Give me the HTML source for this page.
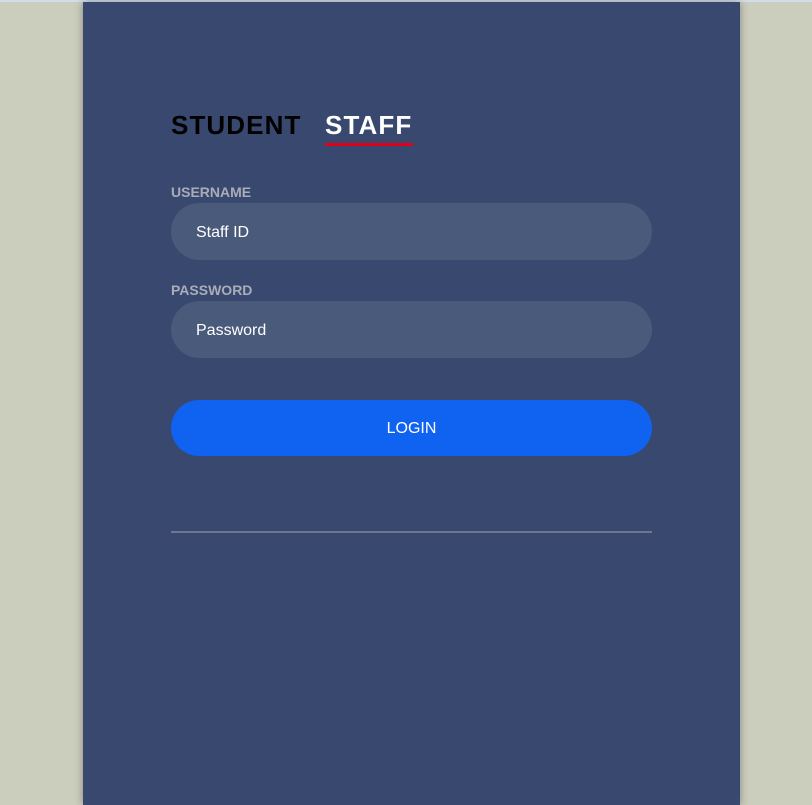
<!DOCTYPE html>
<html><head><style>
html,body{margin:0;padding:0;}
body{width:812px;height:805px;background:#cbcdbd;position:relative;overflow:hidden;font-family:"Liberation Sans",sans-serif;}
.top{position:absolute;left:0;top:0;width:812px;height:2px;background:#d3dde9;}
.card{position:absolute;left:83px;top:2px;width:657px;height:803px;background:#39486e;box-shadow:0 0 8px rgba(0,0,0,0.35);}
.tab{position:absolute;top:109px;font-size:26px;font-weight:bold;line-height:32px;letter-spacing:1.1px;}
.ul{position:absolute;left:325px;top:143px;width:88px;height:3px;background:#e0001a;}
.lbl{position:absolute;left:171px;font-size:14px;font-weight:bold;color:#a9adb8;}
.inp{position:absolute;left:171px;width:481px;height:57px;border-radius:29px;background:#4a5a7b;color:#fff;font-size:16px;line-height:59px;box-sizing:border-box;padding-left:25px;}
.btn{position:absolute;left:171px;top:400px;width:481px;height:56px;border-radius:28px;background:#1062f0;color:#fff;font-size:16px;line-height:58px;text-align:center;}
.hr{position:absolute;left:171px;top:531px;width:481px;height:2px;background:#6d7791;}
</style></head><body>
<div class="top"></div>
<div class="card"></div>
<div class="tab" style="left:171px;color:#000;">STUDENT</div>
<div class="tab" style="left:325px;color:#fff;">STAFF</div>
<div class="ul"></div>
<div class="lbl" style="top:184px;">USERNAME</div>
<div class="inp" style="top:203px;">Staff ID</div>
<div class="lbl" style="top:282px;">PASSWORD</div>
<div class="inp" style="top:301px;">Password</div>
<div class="btn">LOGIN</div>
<div class="hr"></div>
</body></html>
